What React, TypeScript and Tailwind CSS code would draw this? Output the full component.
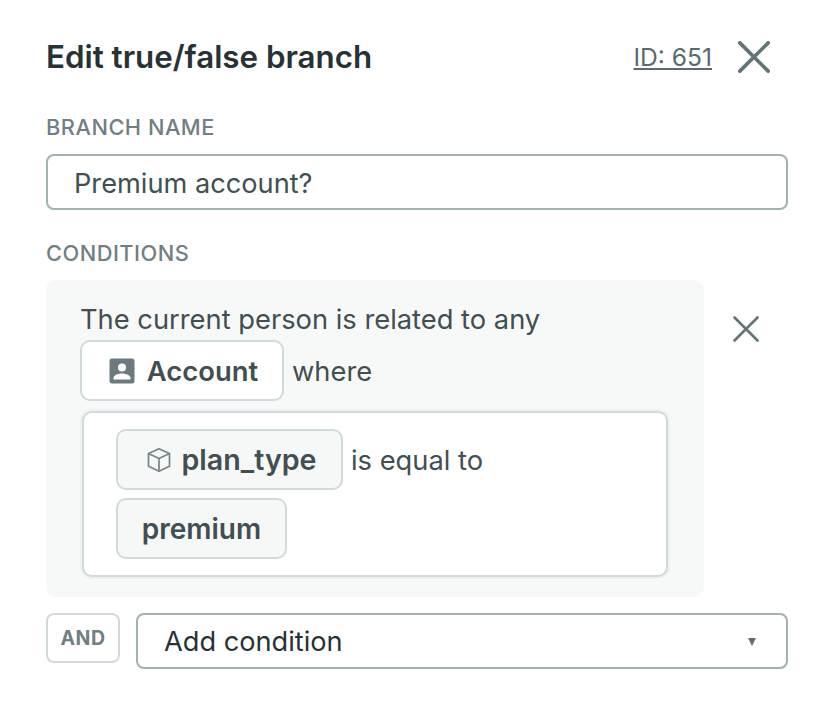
import React from "react";

const AccountIcon = () => (
  <svg width="26" height="26" viewBox="0 0 26 26" className="shrink-0">
    <rect x="0.5" y="0.5" width="25" height="25" rx="2.5" fill="#6b7a7e" />
    <circle cx="13" cy="9.5" r="4" fill="#fff" />
    <path d="M4.5 21.5v-1.6c0-2.9 5.2-4.4 8.5-4.4s8.5 1.5 8.5 4.4v1.6z" fill="#fff" />
  </svg>
);

const BoxIcon = () => (
  <svg width="26" height="26" viewBox="0 0 26 26" fill="none" stroke="#75858a" strokeWidth="1.7" strokeLinejoin="round" className="shrink-0">
    <path d="M13 1.8 23.5 6.6v12.6L13 24.2 2.5 19.2V6.6z" />
    <path d="M2.5 6.6 13 11.6l10.5-5M13 11.6v12.6" />
  </svg>
);

const CloseIcon = ({ size, width }: { size: number; width: number }) => (
  <svg width={size} height={size} viewBox="0 0 26 26" fill="none" stroke="#637478" strokeWidth={width} strokeLinecap="round">
    <path d="M1.5 1.5 24.5 24.5M24.5 1.5 1.5 24.5" />
  </svg>
);

export default function App() {
  return (
    <div className="min-h-[716px] w-[834px] bg-white px-[46px] pt-[36px] font-['Inter',sans-serif] text-[#414f52]">
      <div className="flex h-[42px] items-center justify-between pr-[18px]">
        <h1 className="text-[31.3px] font-semibold leading-[42px] text-[#263236]">Edit true/false branch</h1>
        <div className="flex items-center gap-[26px]">
          <a className="text-[24.6px] leading-[42px] text-[#5b6a6e] underline underline-offset-2">ID: 651</a>
          <CloseIcon size={32} width={3} />
        </div>
      </div>

      <div className="mt-[36px] text-[21.8px] font-medium uppercase leading-[26px] tracking-[0.5px] text-[#6f7f83]">Branch name</div>
      <div className="mt-[14px] flex h-[56px] items-center rounded-[8px] border-2 border-[#a3b1b3] pl-[26px] pt-[4px] text-[27.2px] text-[#414f52]">
        Premium account?
      </div>

      <div className="mt-[30px] text-[21.8px] font-medium uppercase leading-[26px] tracking-[0.5px] text-[#6f7f83]">Conditions</div>

      <div className="mt-[14px] flex items-start">
        <div className="w-[658px] rounded-[10px] bg-[#f7f9f9] pb-[20px] pl-[34px] pr-[36px] pt-[21px] text-[27.3px] leading-[38px]">
          <div className="h-[39px]">The current person is related to any</div>
          <div className="flex h-[61px] items-center gap-[8px]">
            <div className="flex h-[61px] w-[204px] items-center justify-center gap-[12px] rounded-[10px] border-2 border-[#d0d9db] bg-white pl-[3px] text-[27.4px] font-semibold">
              <AccountIcon />
              Account
            </div>
            <span className="mt-[2px]">where</span>
          </div>
          <div className="ml-[2px] mt-[10px] h-[166px] rounded-[10px] border-2 border-[#d0d9db] bg-white pl-[32px] pt-[16px] shadow-[0_0_0_2px_#eef1f1]">
            <div className="flex items-center gap-[8px]">
              <div className="flex h-[61px] w-[227px] items-center justify-center gap-[10px] rounded-[10px] border-2 border-[#d0d9db] bg-[#f6f8f8] pl-[3px] text-[28.6px] font-semibold">
                <BoxIcon />
                plan_type
              </div>
              <span className="mt-[2px]">is equal to</span>
            </div>
            <div className="mt-[8px] flex h-[61px] w-[171px] items-center justify-center rounded-[10px] border-2 border-[#d0d9db] bg-[#f6f8f8] text-[28px] font-semibold">
              premium
            </div>
          </div>
        </div>
        <div className="ml-[29px] mt-[36px]">
          <CloseIcon size={26} width={2.6} />
        </div>
      </div>

      <div className="mt-[16px] flex items-start gap-[16px]">
        <div className="flex h-[50px] w-[74px] items-center justify-center rounded-[8px] border-2 border-[#d0d9db] pt-[1px] text-[19.5px] font-bold tracking-[0.5px] text-[#6f7f83]">
          AND
        </div>
        <div className="flex h-[56px] flex-1 items-center justify-between rounded-[8px] border-2 border-[#a3b1b3] pl-[26px] pr-[30px] pt-[2px] text-[27.2px] text-[#263236]">
          Add condition
          <svg width="8" height="8" viewBox="0 0 8 8">
            <path d="M0 0h8L4 8z" fill="#5e6e72" />
          </svg>
        </div>
      </div>
    </div>
  );
}
